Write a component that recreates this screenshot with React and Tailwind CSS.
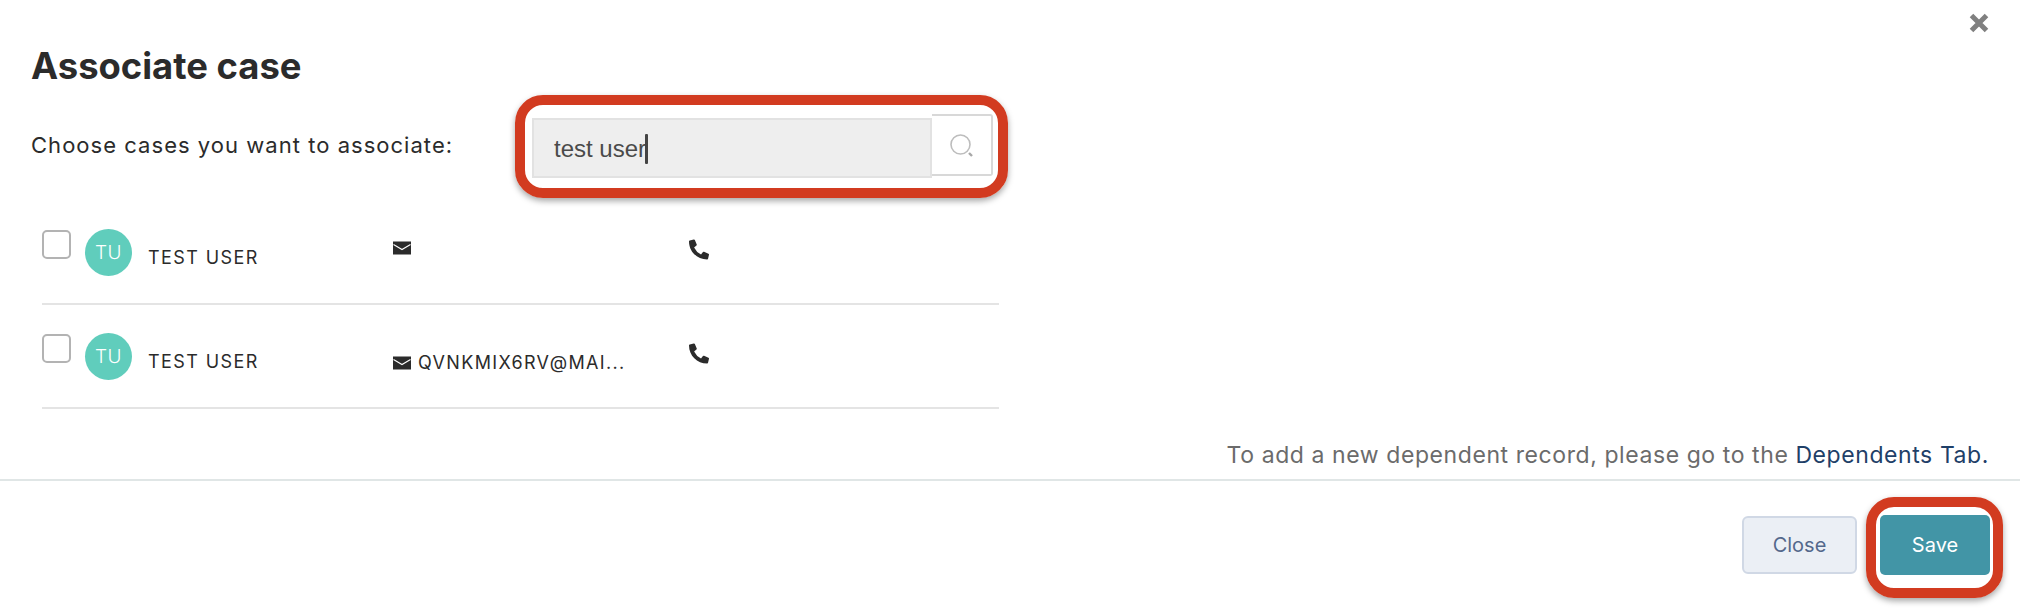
import React from "react";
import { FaPhoneAlt } from "react-icons/fa";

const Mail = () => (
  <svg width="18" height="14" viewBox="0 0 18 14" className="shrink-0">
    <rect width="18" height="13" y="0.5" fill="#2b2b2b" />
    <path d="M0.5 3.5 L9 8.5 L17.5 3.5" fill="none" stroke="#fff" strokeWidth="1.1" />
  </svg>
);

const Row = ({ email, mailClass, textClass }) => (
  <div className="h-[104px] border-b-2 border-[#e4e4e4] flex items-start">
    <div className="w-[29px] h-[29px] mt-[29px] rounded-[5px] border-2 border-[#b3b3b3] bg-white shrink-0" />
    <div className="w-[47px] h-[47px] mt-[28px] ml-[14px] pt-[2px] rounded-full bg-[#60cdbc] text-white flex items-center justify-center text-[19px] tracking-[0.5px] font-light font-['Inter'] shrink-0">
      TU
    </div>
    <div className="w-[245px] ml-[16px] mt-[46px] text-[18px] leading-[22px] tracking-[1.4px] text-[#2b2b2b] font-['Inter']">TEST USER</div>
    <div className={`w-[296px] flex items-center gap-[7px] ${mailClass}`}>
      <Mail />
      {email && <span className={`text-[18px] leading-[22px] tracking-[1.35px] text-[#2b2b2b] font-['Inter'] whitespace-nowrap ${textClass}`}>{email}</span>}
    </div>
    <FaPhoneAlt className="mt-[38px] text-[#2b2b2b] shrink-0" style={{ width: 20, height: 21 }} />
  </div>
);

export default function App() {
  return (
    <div className="relative w-[2020px] h-[616px] bg-white overflow-hidden flex flex-col font-['Inter']">
      <button className="absolute top-[12px] right-[30px] text-[#808080]">
        <svg width="22" height="22" viewBox="0 0 22 22" className="block">
          <path d="M3.5 3.5 L18.5 18.5 M18.5 3.5 L3.5 18.5" stroke="#808080" strokeWidth="5" />
        </svg>
      </button>

      <h1 className="mt-[46px] ml-[31px] text-[36.4px] leading-[40px] font-bold text-[#2b2b2b]">Associate case</h1>

      <div className="flex items-start ml-[31px] mt-[28px]">
        <p className="w-[501px] mt-[17px] text-[22px] leading-[28px] tracking-[1.03px] text-[#2b2b2b]">Choose cases you want to associate:</p>
        <div className="relative flex">
          <div className="absolute -left-[17px] -top-[19px] w-[493px] h-[103px] rounded-[28px] border-[10px] border-[#d23b20] shadow-[0_3px_6px_rgba(0,0,0,0.35)]" />
          <div className="w-[400px] h-[60px] mt-[4px] bg-[#eeeeee] border-2 border-[#e2e2e2] flex items-center pl-[20px] pt-[1px] text-[24px] text-[#4a4a4a] font-['Liberation_Sans']">
            <span>test user</span>
            <span className="w-[3px] h-[30px] bg-[#444] -ml-[1px] rounded-[1px]" />
          </div>
          <div className="w-[61px] h-[62px] bg-white border-2 border-[#d8d8d8] border-l-0 rounded-r-[3px] flex items-center justify-center">
            <svg width="24" height="24" viewBox="0 0 24 24" className="mt-[2px]">
              <circle cx="10.5" cy="10.5" r="9.5" fill="none" stroke="#bdbdbd" strokeWidth="1.6" />
              <path d="M19 19 L22 22" stroke="#a8a8a8" strokeWidth="2.4" />
            </svg>
          </div>
        </div>
      </div>

      <div className="w-[957px] ml-[42px] mt-[23px]">
        <Row mailClass="mt-[40px]" />
        <Row email="QVNKMIX6RV@MAI..." mailClass="mt-[47px]" />
      </div>

      <p className="mt-[32px] mr-[31px] text-right text-[23px] leading-[28px] tracking-[0.58px] text-[#6b6b6b]">
        To add a new dependent record, please go to the <span className="text-[#1f4068]">Dependents Tab.</span>
      </p>

      <div className="mt-[10px] h-[2px] bg-[#e0e6e6]" />

      <div className="flex justify-end items-center mt-[34px] mr-[30px] gap-[23px]">
        <button className="w-[115px] h-[58px] rounded-[6px] bg-[#ebeff5] border-2 border-[#d0d8e5] text-[#54688c] text-[20px]">Close</button>
        <div className="relative">
          <div className="absolute -left-[14px] -top-[18px] -right-[13px] -bottom-[23px] rounded-[28px] border-[10px] border-[#d23b20] shadow-[0_3px_6px_rgba(0,0,0,0.35)]" />
          <button className="block w-[110px] h-[60px] rounded-[5px] bg-[#4295a6] text-white text-[20px]">Save</button>
        </div>
      </div>
    </div>
  );
}
